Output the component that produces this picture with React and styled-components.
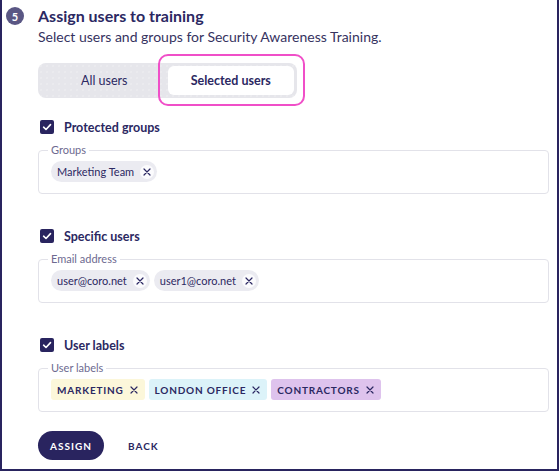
import React from "react";
import styled, { createGlobalStyle } from "styled-components";

const NAVY = "#29245f";
const TEXT = "#2b2862";

const GlobalStyle = createGlobalStyle`
  html, body { margin: 0; padding: 0; background: #ffffff; }
  body { font-family: Lato, "Noto Sans", sans-serif; color: ${TEXT}; }
  * { box-sizing: border-box; }
`;

const Frame = styled.div`
  width: 559px;
  height: 471px;
  border: 2px solid ${NAVY};
  border-top: none;
  padding: 5px 8px 0 4px;
  display: grid;
  grid-template-columns: 18px 1fr;
  column-gap: 14px;
  align-items: start;
  background: #fff;
`;

const StepBadge = styled.div`
  width: 18px;
  height: 18px;
  margin-top: 2px;
  border-radius: 50%;
  background: #5a5784;
  color: #fff;
  font-size: 11px;
  font-weight: 700;
  display: flex;
  align-items: center;
  justify-content: center;
`;

const Content = styled.div`
  display: flex;
  flex-direction: column;
  min-width: 0;
`;

const Title = styled.h2`
  margin: 0;
  font-size: 16px;
  line-height: 22px;
  font-weight: 700;
  color: ${TEXT};
`;

const Subtitle = styled.p`
  margin: 0;
  font-size: 14px;
  line-height: 20px;
  color: #36335f;
`;

const TabTrack = styled.div`
  margin-top: 16px;
  width: 259px;
  height: 35px;
  padding: 3px;
  border-radius: 8px;
  background-color: #e6e6eb;
  background-image: radial-gradient(#eeeef2 0.6px, transparent 0.8px);
  background-size: 6px 6px;
  display: grid;
  grid-template-columns: 1fr 1fr;
`;

const Tab = styled.button`
  position: relative;
  border: none;
  margin: 0;
  padding: 0;
  border-radius: 6px;
  font-family: inherit;
  font-size: 12.5px;
  color: ${TEXT};
  cursor: pointer;
  background: ${(p) => (p.$active ? "#ffffff" : "transparent")};
  font-weight: ${(p) => (p.$active ? 700 : 400)};
  &::after {
    content: "";
    display: ${(p) => (p.$active ? "block" : "none")};
    position: absolute;
    top: -12px;
    bottom: -11px;
    left: -10px;
    right: -11px;
    border: 2px solid #f04fc8;
    border-radius: 10px;
    pointer-events: none;
  }
`;

const Sections = styled.div`
  margin-top: 19px;
  display: flex;
  flex-direction: column;
  gap: 32px;
`;

const Section = styled.section`
  display: flex;
  flex-direction: column;
`;

const CheckRow = styled.label`
  height: 20px;
  display: flex;
  align-items: center;
  gap: 10px;
  padding-left: 2px;
  font-size: 12.5px;
  font-weight: 700;
  color: ${TEXT};
`;

const CheckBox = styled.span`
  width: 14px;
  height: 14px;
  border-radius: 2px;
  background: ${NAVY};
  display: flex;
  align-items: center;
  justify-content: center;
`;

const Field = styled.fieldset`
  margin: 6px 0 0;
  min-width: 0;
  border: 1px solid #e2e2e9;
  border-radius: 4px;
  padding: 4px 11px 11px 12px;
`;

const Legend = styled.legend`
  font-size: 11px;
  line-height: 14px;
  padding: 0 3px;
  margin-left: -3px;
  color: #6d6a90;
`;

const ChipList = styled.div`
  display: flex;
  flex-wrap: wrap;
  gap: 4px;
`;

const Chip = styled.span`
  height: 21px;
  border-radius: 11px;
  background: #ebebf1;
  padding: 0 3px 0 6px;
  display: inline-flex;
  align-items: center;
  gap: 6px;
  font-size: 11px;
  color: ${TEXT};
`;

const ChipClose = styled.span`
  width: 14px;
  height: 14px;
  border-radius: 50%;
  background: #fbfbfd;
  display: flex;
  align-items: center;
  justify-content: center;
`;

const LabelChip = styled.span`
  height: 21px;
  border-radius: 3px;
  background: ${(p) => p.$bg};
  padding: 0 7px 0 6px;
  display: inline-flex;
  align-items: center;
  gap: 6px;
  font-size: 10px;
  font-weight: 700;
  letter-spacing: 0.8px;
  text-transform: uppercase;
  color: ${TEXT};
`;

const Actions = styled.div`
  margin-top: 19px;
  display: flex;
  align-items: center;
  gap: 12px;
`;

const PrimaryButton = styled.button`
  width: 66px;
  height: 29px;
  border: none;
  border-radius: 15px;
  background: ${NAVY};
  color: #fff;
  font-family: inherit;
  font-size: 10px;
  font-weight: 700;
  letter-spacing: 1px;
  cursor: pointer;
`;

const TextButton = styled.button`
  border: none;
  background: none;
  padding: 0 12px;
  height: 29px;
  color: ${TEXT};
  font-family: inherit;
  font-size: 10px;
  font-weight: 700;
  letter-spacing: 1px;
  cursor: pointer;
`;

const Check = () => (
  <svg width="10" height="10" viewBox="0 0 10 10" fill="none">
    <path d="M1.6 5.2 L4 7.5 L8.5 2.6" stroke="#fff" strokeWidth="1.6" strokeLinecap="round" strokeLinejoin="round" />
  </svg>
);

const Cross = ({ size = 8 }) => (
  <svg width={size} height={size} viewBox="0 0 8 8" fill="none">
    <path d="M1 1 L7 7 M7 1 L1 7" stroke={TEXT} strokeWidth="1.2" strokeLinecap="round" />
  </svg>
);

const sections = [
  { title: "Protected groups", legend: "Groups", chips: ["Marketing Team"] },
  { title: "Specific users", legend: "Email address", chips: ["user@coro.net", "user1@coro.net"] },
  {
    title: "User labels",
    legend: "User labels",
    labels: [
      { name: "Marketing", bg: "#fcf7da" },
      { name: "London office", bg: "#dcf3f9" },
      { name: "Contractors", bg: "#dec3ed" },
    ],
  },
];

export default function App() {
  return (
    <>
      <GlobalStyle />
      <Frame>
        <StepBadge>5</StepBadge>
        <Content>
          <Title>Assign users to training</Title>
          <Subtitle>Select users and groups for Security Awareness Training.</Subtitle>
          <TabTrack>
            <Tab>All users</Tab>
            <Tab $active>Selected users</Tab>
          </TabTrack>
          <Sections>
            {sections.map((s) => (
              <Section key={s.title}>
                <CheckRow>
                  <CheckBox>
                    <Check />
                  </CheckBox>
                  {s.title}
                </CheckRow>
                <Field>
                  <Legend>{s.legend}</Legend>
                  <ChipList>
                    {s.chips &&
                      s.chips.map((c) => (
                        <Chip key={c}>
                          {c}
                          <ChipClose>
                            <Cross />
                          </ChipClose>
                        </Chip>
                      ))}
                    {s.labels &&
                      s.labels.map((l) => (
                        <LabelChip key={l.name} $bg={l.bg}>
                          {l.name}
                          <Cross />
                        </LabelChip>
                      ))}
                  </ChipList>
                </Field>
              </Section>
            ))}
          </Sections>
          <Actions>
            <PrimaryButton>ASSIGN</PrimaryButton>
            <TextButton>BACK</TextButton>
          </Actions>
        </Content>
      </Frame>
    </>
  );
}
